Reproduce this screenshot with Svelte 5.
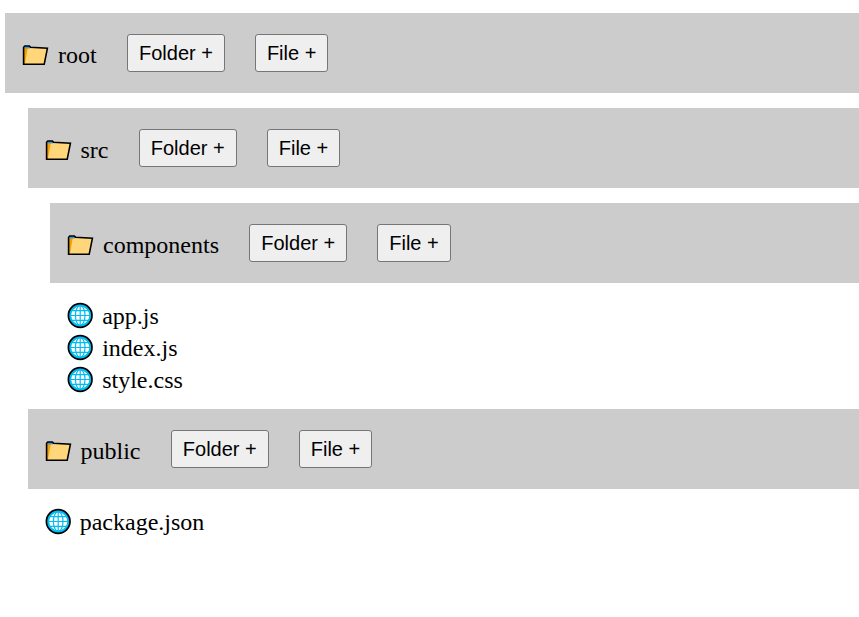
<script>
  const tree = {
    name: 'root',
    folder: true,
    items: [
      {
        name: 'src',
        folder: true,
        items: [
          { name: 'components', folder: true, items: [] },
          { name: 'app.js' },
          { name: 'index.js' },
          { name: 'style.css' }
        ]
      },
      { name: 'public', folder: true, items: [] },
      { name: 'package.json' }
    ]
  };
</script>

{#snippet node(item)}
  {#if item.folder}
    <div class="folder">
      <div class="bar">
        <span class="label">
          <svg class="icon" width="30" height="30" viewBox="0 0 30 30" aria-hidden="true">
            <path d="M3.6 24.3V7.3L4.8 6h4.6l1.2 1.3 16.8 1L24.2 24.3z" fill="#ffd679" />
            <path d="M4 24V8h3.8L4.8 24z" fill="#f5a000" />
            <path d="M4.4 6h5.8v2.4H4.4z" fill="#3a96dd" />
            <path d="M3.6 24.3V7.3L4.8 6h4.6l1.2 1.3 16.8 1L24.2 24.3z" fill="none" stroke="#000" stroke-width="1.6" />
          </svg>
          <span class="name">{item.name}</span>
        </span>
        <button>Folder +</button>
        <button>File +</button>
      </div>
      {#if item.items.length}
        <div class="children">
          {#each item.items as child}
            {@render node(child)}
          {/each}
        </div>
      {/if}
    </div>
  {:else}
    <div class="file">
      <svg class="icon" width="30" height="30" viewBox="0 0 30 30" aria-hidden="true">
        <circle cx="15.2" cy="14.5" r="11.9" fill="#00bcf2" />
        <circle cx="15.2" cy="14.5" r="9.2" fill="#fff" />
        <g fill="none" stroke="#00bcf2" stroke-width="1.2">
          <path d="M15.2 4v21M4 14.5h22M6 9.7h18.4M6 19.3h18.4" />
          <ellipse cx="15.2" cy="14.5" rx="4.8" ry="10" />
          <circle cx="15.2" cy="14.5" r="10.1" stroke-width="1.8" />
        </g>
        <circle cx="15.2" cy="14.5" r="11.8" fill="none" stroke="#000" stroke-width="1.7" />
      </svg>
      <span class="name">{item.name}</span>
    </div>
  {/if}
{/snippet}

<main>
  {@render node(tree)}
</main>

<style>
  :global(body) {
    margin: 0;
    background: #fff;
    overflow: hidden;
  }

  main {
    padding: 13px 0 0 5px;
    font: 24px/32px 'Liberation Serif', 'Times New Roman', serif;
    color: #000;
  }

  .bar {
    display: flex;
    align-items: center;
    gap: 30px;
    height: 80px;
    padding-left: 15px;
    margin-bottom: 15px;
    background: #ccc;
    box-sizing: border-box;
  }

  .label,
  .file {
    display: flex;
    align-items: center;
    gap: 8px;
  }

  .label {
    padding: 4px 0.3px 0 0;
  }

  .children {
    padding-left: 22.5px;
  }

  .file {
    box-sizing: border-box;
    height: 32px;
    gap: 7.2px;
    padding: 4px 0 0 15px;
  }

  .folder + .folder {
    margin-top: 15px;
  }

  .icon {
    flex: none;
    display: block;
  }

  button {
    box-sizing: border-box;
    height: 38px;
    margin: 0;
    padding: 0 11px;
    border: 1px solid #767676;
    border-radius: 3px;
    background: #efefef;
    color: #000;
    font: 20px/23px 'Liberation Sans', Arial, sans-serif;
  }
</style>
